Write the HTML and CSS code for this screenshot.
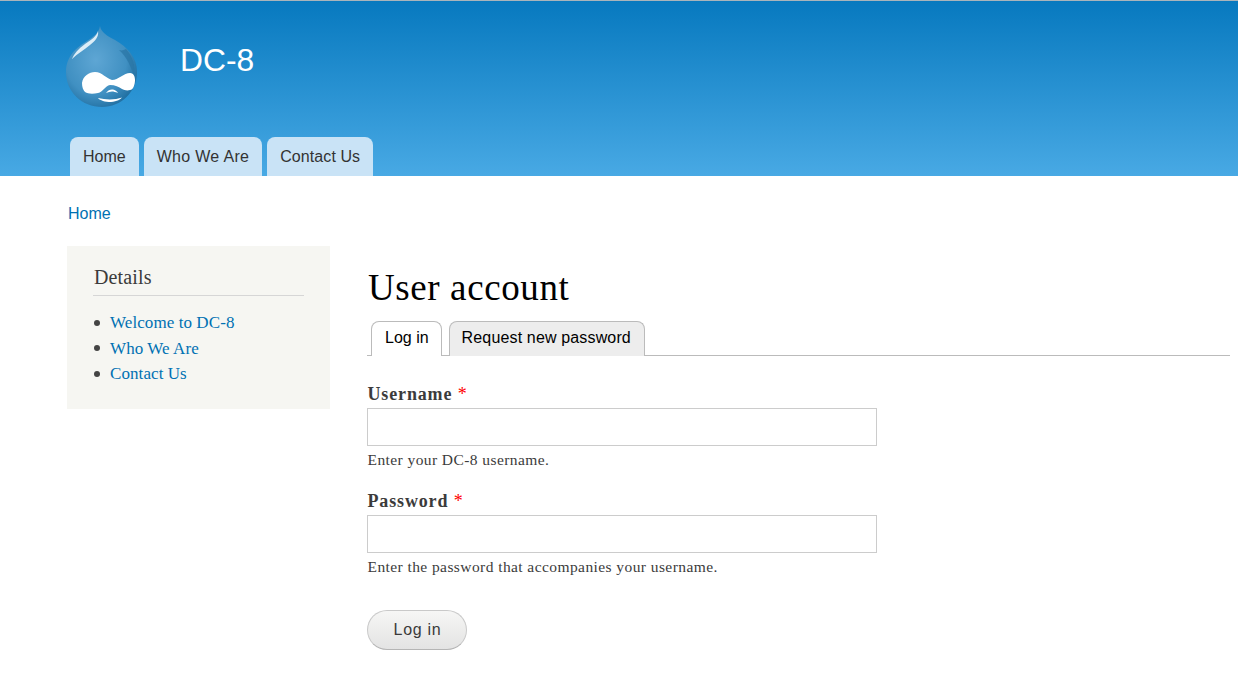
FILE: index.html
```html
<!DOCTYPE html>
<html lang="en">
<head>
<meta charset="utf-8">
<title>User account | DC-8</title>
<link rel="stylesheet" href="styles.css">
</head>
<body>
<header class="site-header">
  <div class="branding">
    <svg class="logo" width="72" height="82" viewBox="0 0 72 82" aria-hidden="true">
      <defs>
        <radialGradient id="drop" cx="0.42" cy="0.42" r="0.66">
          <stop offset="0" stop-color="#5ea6d4"/>
          <stop offset="0.65" stop-color="#4090c2"/>
          <stop offset="1" stop-color="#1c6a9c"/>
        </radialGradient>
      </defs>
      <path d="M34 0C35 6 41 10 49 14C61 21 71 31 71 46C71 66 55 81 36 81C16 81 0 66 0 46C0 30 11 21 21 15C27 11 33 7 34 0Z" fill="url(#drop)"/>
      <path d="M32 5C31 10 25 14 19 18C12 23 8 28 6 33C12 27 18 24 24 19C29 15 33 11 32 5Z" fill="#dcedf7"/>
      <path d="M60 23C67 31 70 40 68 50C65 41 61 31 53 24C56 25 58 24 60 23Z" fill="#2a76a6" opacity=".75"/>
      <path d="M16 57C17 50 23 46 29 46C36 46 41 53 46 54C52 54 58 47 64 47C68 47 69 51 69 54C69 59 67 64 64 64C61 65 58 64 56 63C53 61 49 59 44 59C39 60 37 66 32 67C27 68 22 68 19 66C17 64 16 61 16 57Z" fill="#fff"/>
      <path d="M32 72C40 74 49 74 56 71.5C55 73 51 75.5 45 76C39 76 34 74.5 32 72Z" fill="#fff"/>
      <path d="M40 67C42 64 45 63 47 63.5C49 64 51 65 52 67C49 66 48 65.5 46 65.5C44 65.5 42 66 40 67Z" fill="#fff"/>
    </svg>
    <div class="site-name">DC-8</div>
  </div>
  <nav class="main-menu">
    <a href="#">Home</a>
    <a href="#">Who We Are</a>
    <a href="#">Contact Us</a>
  </nav>
</header>
<div class="page">
  <div class="breadcrumb"><a href="#">Home</a></div>
  <div class="columns">
    <aside class="sidebar">
      <h2>Details</h2>
      <ul>
        <li><a href="#">Welcome to DC-8</a></li>
        <li><a href="#">Who We Are</a></li>
        <li><a href="#">Contact Us</a></li>
      </ul>
    </aside>
    <main class="content">
      <h1>User account</h1>
      <div class="tabs">
        <a class="tab active" href="#">Log in</a>
        <a class="tab" href="#">Request new password</a>
      </div>
      <form class="login">
        <div class="field">
          <label for="user">Username <span class="req">*</span></label>
          <input id="user" type="text">
          <div class="desc">Enter your DC-8 username.</div>
        </div>
        <div class="field">
          <label for="pass">Password <span class="req">*</span></label>
          <input id="pass" type="password">
          <div class="desc">Enter the password that accompanies your username.</div>
        </div>
        <button type="button" class="submit">Log in</button>
      </form>
    </main>
  </div>
</div>
</body>
</html>
```
FILE: styles.css
```css
* { box-sizing: border-box; }
html, body { margin: 0; padding: 0; }
body {
  background: #fff;
  color: #3b3b3b;
  font-family: "Liberation Serif", serif;
  overflow: hidden;
}
a { text-decoration: none; color: #0071b3; }
.site-header {
  height: 176px;
  border-top: 1px solid #a9b4bb;
  background: linear-gradient(#0779bf, #48a9e4);
  display: flex;
  flex-direction: column;
  padding-left: 66px;
}
.branding {
  display: flex;
  align-items: flex-start;
  height: 136px;
  padding-top: 25px;
}
.logo { display: block; }
.site-name {
  margin-left: 42px;
  margin-top: 16px;
  color: #fff;
  font: 31.8px/36px "Liberation Sans", sans-serif;
}
.main-menu {
  display: flex;
  gap: 5px;
  padding-left: 4px;
}
.main-menu a {
  height: 39px;
  padding: 0 13px;
  background: #c9e3f6;
  color: #333;
  border-radius: 8px 8px 0 0;
  font: 16px/40px "Liberation Sans", sans-serif;
  letter-spacing: .3px;
}
.main-menu a:first-child { letter-spacing: 0; }
.main-menu a:last-child { letter-spacing: .08px; }
.page { padding: 0 8px 0 67px; }
.breadcrumb {
  height: 70px;
  padding: 28px 0 0 1px;
  font: 16px/20px "Liberation Sans", sans-serif;
}
.columns { display: flex; align-items: flex-start; }
.sidebar {
  width: 262.5px;
  height: 162.5px;
  background: #f6f6f2;
  padding: 20px 26px 0 26px;
  flex: none;
}
.sidebar h2 {
  margin: 0;
  height: 30px;
  border-bottom: 1px solid #d6d6d6;
  font-weight: normal;
  font-size: 20px;
  line-height: 23px;
  letter-spacing: .15px;
  text-indent: 1px;
}
.sidebar ul {
  list-style: none;
  margin: 14px 0 0;
  padding: 0;
  font-size: 17px;
  line-height: 25.5px;
  letter-spacing: .08px;
}
.sidebar li {
  display: flex;
  align-items: center;
  gap: 10px;
  padding-left: 1px;
}
.sidebar li::before {
  content: "";
  width: 6px;
  height: 6px;
  border-radius: 50%;
  background: #444;
  flex: none;
}
.content { flex: 1; margin-left: 37.5px; padding-top: 23px; }
h1 {
  margin: 0 0 0 1px;
  font-weight: normal;
  color: #000;
  font-size: 37px;
  line-height: 38px;
  letter-spacing: .6px;
}
.tabs {
  display: flex;
  gap: 7px;
  height: 35px;
  margin-top: 14px;
  padding-left: 4px;
  border-bottom: 1px solid #bbb;
}
.tab {
  height: 35px;
  padding: 0 13px 0 12px;
  border: 1px solid #bbb;
  border-bottom: 0;
  border-radius: 8px 8px 0 0;
  background: #ededed;
  color: #000;
  font: 16px/32px "Liberation Sans", sans-serif;
  letter-spacing: .15px;
}
.tab.active { background: #fff; padding: 0 12px 0 13px; letter-spacing: 0; }
.login { padding-top: 27px; margin-left: -.5px; }
.field { margin-bottom: 21px; }
.field label {
  display: block;
  padding-left: 1px;
  font-size: 18px;
  font-weight: bold;
  line-height: 22px;
  letter-spacing: .85px;
}
.req { color: #f00; font-weight: normal; }
.field input {
  display: block;
  width: 510px;
  height: 38px;
  margin-top: 3px;
  border: 1px solid #ccc;
  background: #fff;
  padding: 0 8px;
}
.desc {
  margin-top: 5px;
  padding-left: 1px;
  font-size: 15.5px;
  line-height: 18px;
  letter-spacing: .42px;
}
.submit {
  display: block;
  width: 100px;
  height: 40px;
  margin-top: 34px;
  padding: 0 0 0 2px;
  border: 1px solid #c9c9c9;
  border-bottom-color: #b5b5b5;
  border-radius: 20px;
  background: linear-gradient(#f6f6f5, #e3e3e3);
  color: #3a3a3a;
  font: 16px/20px "Liberation Sans", sans-serif;
  letter-spacing: .7px;
}
```
